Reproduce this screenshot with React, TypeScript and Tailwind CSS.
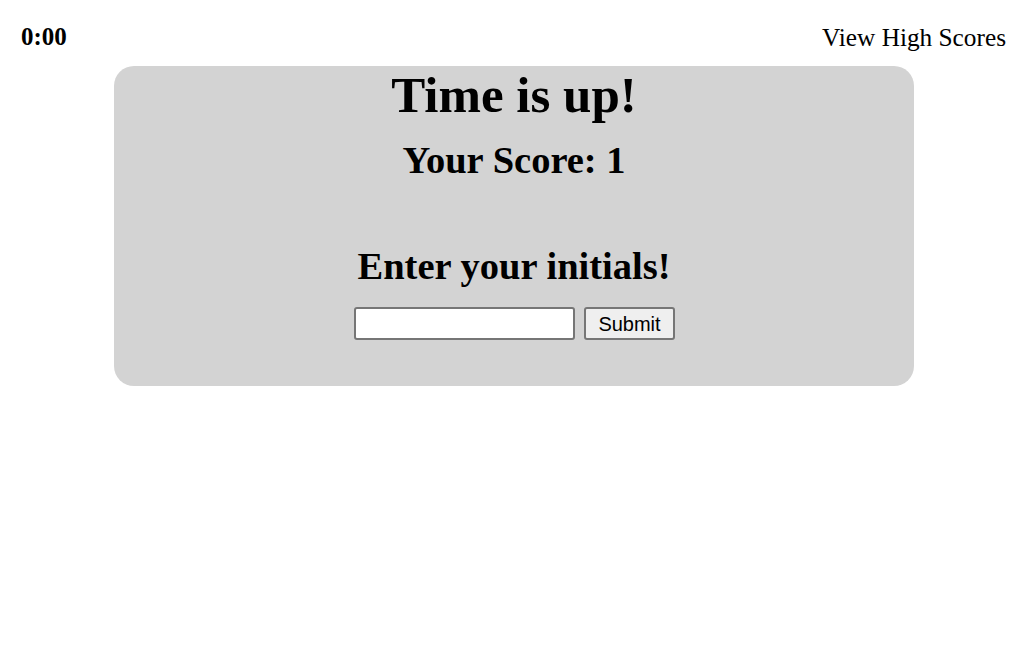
export default function App() {
  return (
    <div className="min-h-screen bg-white text-black font-['Liberation_Serif',serif]">
      <header className="flex items-start justify-between pl-[21px] pr-[20px] pt-[21px] h-[66px]">
        <span className="text-[25px] font-bold leading-[32px]">0:00</span>
        <a className="text-[25.3px] leading-[32px] cursor-pointer">View High Scores</a>
      </header>
      <main className="ml-[114px] w-[800px] h-[320px] rounded-[20px] bg-[#d3d3d3] flex flex-col items-center">
        <h1 className="text-[51px] font-bold leading-[58px] mt-[0px]">Time is up!</h1>
        <h2 className="text-[38.5px] font-bold leading-[44px] mt-[14px]">Your Score: 1</h2>
        <h2 className="text-[38.5px] font-bold leading-[44px] mt-[62px]">Enter your initials!</h2>
        <form className="flex items-center gap-[9px] mt-[19px] ml-[1px]">
          <input
            type="text"
            className="w-[221px] h-[33px] bg-white border-2 border-[#767676] rounded-[3px] px-1 outline-none"
          />
          <button
            type="button"
            className="h-[33px] w-[91px] bg-[#efefef] border-2 border-[#767676] rounded-[3px] text-[20px] font-['Liberation_Sans',sans-serif]"
          >
            Submit
          </button>
        </form>
      </main>
    </div>
  );
}
